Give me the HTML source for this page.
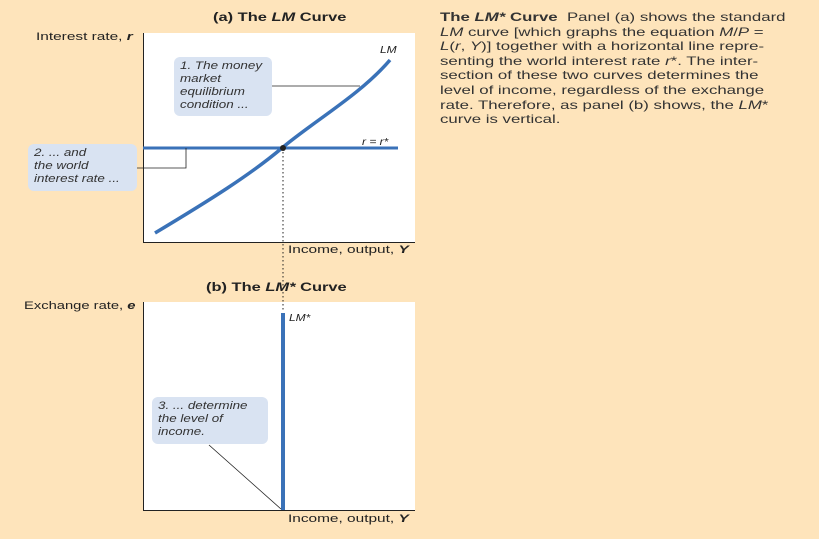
<!DOCTYPE html>
<html><head><style>
body{margin:0;width:819px;height:539px;background:#fee4bb;position:relative;overflow:hidden;font-family:"Liberation Sans",sans-serif;color:#222}
.t{position:absolute;white-space:nowrap;transform-origin:0 0}
.s{transform:scaleX(1.4)}
.box{position:absolute;background:#d9e3f2;border-radius:6px;font-style:italic;font-size:11px;line-height:13px;padding:3px 6px;box-sizing:border-box;color:#333}
.box span{display:block;transform:scaleX(1.22);transform-origin:0 0;white-space:nowrap}
</style></head><body>
<svg width="819" height="539" style="position:absolute;left:0;top:0">
<rect x="143" y="33" width="272" height="209" fill="#fff"/>
<rect x="143" y="302" width="272" height="208" fill="#fff"/>
<line x1="143.5" y1="33" x2="143.5" y2="242" stroke="#222" stroke-width="1"/>
<line x1="143" y1="242.5" x2="415" y2="242.5" stroke="#222" stroke-width="1"/>
<line x1="143.5" y1="302" x2="143.5" y2="510" stroke="#222" stroke-width="1"/>
<line x1="143" y1="510.5" x2="415" y2="510.5" stroke="#222" stroke-width="1"/>
<line x1="143" y1="148" x2="398" y2="148" stroke="#3a72b8" stroke-width="3"/>
<path d="M155 233 C 210 200, 250 175, 282 148 S 360 95, 390 60" fill="none" stroke="#3a72b8" stroke-width="3.5"/>
<line x1="283" y1="152" x2="283" y2="312" stroke="#222" stroke-width="1" stroke-dasharray="1.5,2.5"/>
<circle cx="283" cy="148" r="3" fill="#222"/>
<line x1="283" y1="313" x2="283" y2="510" stroke="#3a72b8" stroke-width="4"/>
<polyline points="272,86 360,86" fill="none" stroke="#222" stroke-width="0.8"/>
<polyline points="137,168 186,168 186,148" fill="none" stroke="#222" stroke-width="0.8"/>
<line x1="209" y1="445" x2="281" y2="509" stroke="#222" stroke-width="0.8"/>
</svg>
<div class="t" style="left:213px;top:10px;font-size:12px;font-weight:bold;transform:scaleX(1.37)">(a) The <i>LM</i> Curve</div>
<div class="t s" style="left:36px;top:31px;font-size:11px">Interest rate, <b><i>r</i></b></div>
<div class="t" style="left:380px;top:45px;font-size:10px;font-style:italic;transform:scaleX(1.2)">LM</div>
<div class="t" style="left:362px;top:137px;font-size:10px;font-style:italic;transform:scaleX(1.2)">r = r*</div>
<div class="t s" style="left:288px;top:244px;font-size:11px">Income, output, <b><i>Y</i></b></div>
<div class="box" style="left:174px;top:57px;width:98px;height:59px"><span>1. The money</span><span>market</span><span>equilibrium</span><span>condition ...</span></div>
<div class="box" style="left:28px;top:144px;width:109px;height:47px"><span>2. ... and</span><span>the world</span><span>interest rate ...</span></div>
<div class="t" style="left:206px;top:280px;font-size:12px;font-weight:bold;transform:scaleX(1.37)">(b) The <i>LM*</i> Curve</div>
<div class="t" style="left:24px;top:300px;font-size:11px;transform:scaleX(1.34)">Exchange rate, <b><i>e</i></b></div>
<div class="t" style="left:289px;top:313px;font-size:10px;font-style:italic;transform:scaleX(1.2)">LM*</div>
<div class="box" style="left:152px;top:397px;width:116px;height:47px"><span>3. ... determine</span><span>the level of</span><span>income.</span></div>
<div class="t s" style="left:288px;top:513px;font-size:11px">Income, output, <b><i>Y</i></b></div>
<div class="t" style="left:440px;top:10px;font-size:12px;line-height:14.6px;color:#333;transform:scaleX(1.4)"><b>The <i>LM*</i> Curve</b>&nbsp; Panel (a) shows the standard<br><i>LM</i> curve [which graphs the equation <i>M</i>/<i>P</i> =<br><i>L</i>(<i>r</i>, <i>Y</i>)] together with a horizontal line repre-<br>senting the world interest rate <i>r</i>*. The inter-<br>section of these two curves determines the<br>level of income, regardless of the exchange<br>rate. Therefore, as panel (b) shows, the <i>LM</i>*<br>curve is vertical.</div>
</body></html>
